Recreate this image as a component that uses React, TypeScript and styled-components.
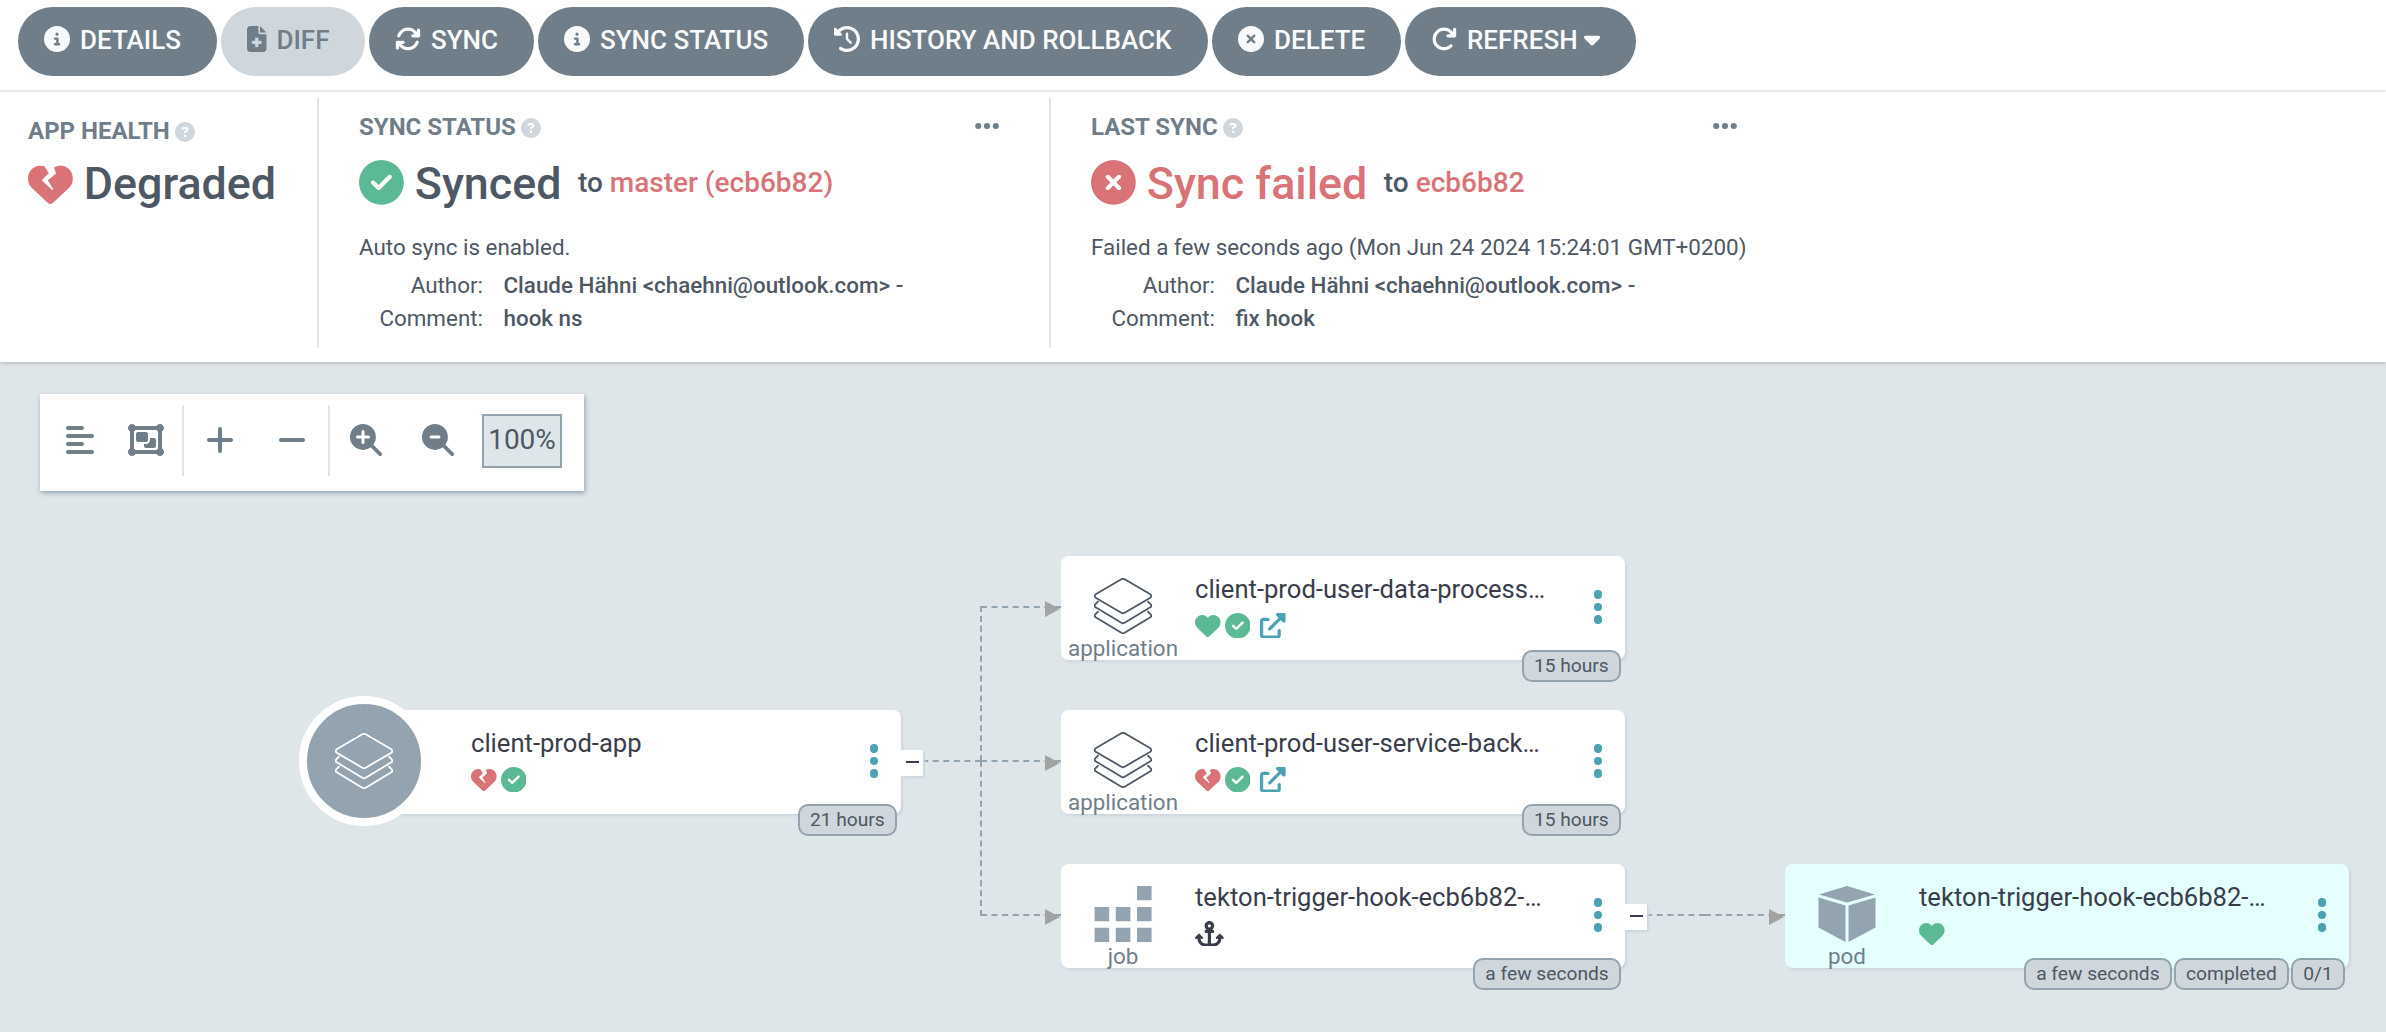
import React from 'react';
import styled, { createGlobalStyle, css } from 'styled-components';
import {
  FaAlignLeft,
  FaAnchor,
  FaArrowRotateRight,
  FaArrowsRotate,
  FaCaretDown,
  FaCircleCheck,
  FaCircleInfo,
  FaCircleQuestion,
  FaCircleXmark,
  FaClockRotateLeft,
  FaEllipsis,
  FaFileMedical,
  FaHeart,
  FaHeartCrack,
  FaMinus,
  FaObjectGroup,
  FaPlus,
} from 'react-icons/fa6';

const color = {
  slate: '#707e89',
  steel: '#93a3b0',
  light: '#cfd6dc',
  canvas: '#dfe6e9',
  line: '#dfe6e9',
  ink: '#4d5864',
  dark: '#393d4b',
  red: '#d97378',
  green: '#5bba95',
  teal: '#4aa2b3',
};

const GlobalStyle = createGlobalStyle`
  * { box-sizing: border-box; }
  body { margin: 0; background: ${color.canvas}; font-family: Roboto, sans-serif; color: ${color.ink}; }
  svg { display: block; flex: none; }
`;

const Page = styled.div`
  display: flex;
  flex-direction: column;
  width: 2386px;
  height: 1032px;
  overflow: hidden;
`;

/* Icon whose glyph is not square: $ratio is its width over its height. */
const Glyph = styled.span<{ $size: number; $ratio?: number }>`
  flex: none;
  svg {
    width: ${p => p.$size * (p.$ratio ?? 1)}px;
    height: ${p => p.$size}px;
  }
`;

/* ---------- Action bar ---------- */

const ActionBar = styled.header`
  display: flex;
  align-items: flex-start;
  gap: 4px;
  height: 92px;
  padding: 7px 18px 0;
  background: #fff;
  border-bottom: 2px solid #f0f3f6;
`;

const ActionButton = styled.button<{ $w: number; $disabled?: boolean }>`
  display: flex;
  align-items: center;
  flex: none;
  width: ${p => p.$w}px;
  height: 69px;
  padding: 0 0 5px 26px;
  border: 0;
  border-radius: 35px;
  background: ${p => (p.$disabled ? color.light : color.slate)};
  color: ${p => (p.$disabled ? color.slate : '#f8fafb')};
  font: 500 26px/34px Roboto, sans-serif;
  white-space: nowrap;
`;

const ActionText = styled.span`
  margin: 2px 6px 0 10px;
`;

/* ---------- Status panel ---------- */

const StatusPanel = styled.section`
  position: relative;
  z-index: 1;
  display: flex;
  height: 270px;
  padding: 6px 0 14px;
  background: #fff;
  box-shadow: 0 1px 4px rgba(109, 120, 130, 0.45);
`;

const StatusItem = styled.div<{ $w: number; $left: number; $top: number; $last?: boolean }>`
  width: ${p => p.$w}px;
  padding: ${p => p.$top}px 0 0 ${p => p.$left}px;
  border-right: ${p => (p.$last ? 0 : 2)}px solid ${color.line};
`;

const ItemLabel = styled.div`
  display: flex;
  align-items: center;
  gap: 5px;
  height: 28px;
  color: ${color.slate};
  font: 700 24px/28px Roboto, sans-serif;
  white-space: nowrap;
  svg { color: ${color.light}; margin-top: 1px; }
`;

const MoreIcon = styled.span`
  margin: 0 48px 0 auto;
  svg { color: ${color.slate}; margin: -3px 0 0; }
`;

const ItemValue = styled.div<{ $color?: string; $gap?: number; $iconTop?: number }>`
  display: flex;
  align-items: center;
  height: 56px;
  margin-top: ${p => p.$gap ?? 15}px;
  color: ${p => p.$color || color.ink};
  font: 500 44.8px/56px Roboto, sans-serif;
  white-space: nowrap;
  svg { margin: ${p => p.$iconTop ?? -3}px 11px 0 0; }
`;

const Revision = styled.span`
  margin: -2px 0 0 16.500px;
  color: ${color.ink};
  font: 500 28px/56px Roboto, sans-serif;
`;

const RevisionLink = styled.a`
  color: ${color.red};
`;

const Message = styled.div`
  margin-top: 20px;
  font: 400 22.4px/30px Roboto, sans-serif;
  white-space: nowrap;
`;

const CommitInfo = styled.dl`
  display: grid;
  grid-template-columns: 124px auto;
  column-gap: 20.500px;
  grid-auto-rows: 33px;
  margin: 7px 0 0;
  font: 400 22.4px/33px Roboto, sans-serif;
  white-space: nowrap;
`;

const Term = styled.dt`
  text-align: right;
`;

const Detail = styled.dd`
  margin: 0;
  font-weight: 500;
`;

/* ---------- Graph toolbar ---------- */

const Canvas = styled.main`
  position: relative;
  flex: 1;
`;

const Toolbar = styled.div`
  display: flex;
  align-items: center;
  width: 544px;
  height: 97px;
  margin: 32px 0 0 40px;
  padding-bottom: 5px;
  background: #fff;
  color: ${color.slate};
  box-shadow: 1px 2px 5px #8fa4b1;
`;

const ToolGroup = styled.div<{ $w: number; $pad: number; $gap: number; $last?: boolean }>`
  display: flex;
  align-items: center;
  gap: ${p => p.$gap}px;
  width: ${p => p.$w}px;
  height: 71px;
  padding-left: ${p => p.$pad}px;
  border-right: ${p => (p.$last ? 0 : 2)}px solid ${color.line};
`;

const ZoomValue = styled.span`
  width: 80px;
  height: 54px;
  margin: 2px 0 0 -12px;
  border: 2px solid ${color.steel};
  background: ${color.canvas};
  color: ${color.ink};
  font: 400 28px/47px Roboto, sans-serif;
  text-align: center;
`;

/* ---------- Graph nodes ---------- */

const Node = styled.article<{ $x: number; $y: number; $bg?: string }>`
  position: absolute;
  left: ${p => p.$x}px;
  top: ${p => p.$y - 362}px;
  display: flex;
  width: 564px;
  height: 104px;
  border-radius: 8px;
  background: ${p => p.$bg || '#fff'};
  box-shadow: 2px 2px 3px #ccd6dd;
`;

const KindColumn = styled.div`
  display: flex;
  flex-direction: column;
  align-items: center;
  width: 124px;
  padding-top: 22px;
  color: ${color.slate};
  font: 400 22.4px/28px Roboto, sans-serif;
`;

const KindIcon = styled.span`
  color: ${color.ink};
`;

const KindLabel = styled.span``;

const RootBadge = styled.div`
  position: absolute;
  left: -38px;
  top: -14px;
  display: flex;
  align-items: center;
  justify-content: center;
  width: 130px;
  height: 130px;
  border: 8px solid #fff;
  border-radius: 50%;
  background: ${color.steel};
  color: #fff;
`;

const NodeBody = styled.div`
  width: 370px;
  margin-left: 10px;
  padding-top: 17px;
`;

const NodeTitle = styled.div`
  color: ${color.dark};
  font: 400 25.6px/33px Roboto, sans-serif;
  white-space: nowrap;
`;

const StatusRow = styled.div`
  display: flex;
  align-items: center;
  gap: 4px;
  height: 26px;
  margin-top: 6.4px;
  color: ${color.dark};
`;

const Tint = styled.span<{ $c: string; $gap?: number }>`
  margin-left: ${p => p.$gap || 0}px;
  color: ${p => p.$c};
`;

const NodeMenu = styled.div`
  display: flex;
  flex-direction: column;
  justify-content: center;
  gap: 4px;
  margin-left: 28.500px;
  padding-bottom: 2px;
`;

const MenuDot = styled.i`
  width: 8.6px;
  height: 8.6px;
  border-radius: 50%;
  background: ${color.teal};
`;

const Tags = styled.div`
  position: absolute;
  right: 4px;
  bottom: -22px;
  display: flex;
  gap: 2px;
`;

const Tag = styled.span`
  height: 32px;
  padding: 0 10.25px;
  border: 2px solid ${color.steel};
  border-radius: 10px;
  background: ${color.light};
  color: ${color.ink};
  font: 400 19.2px/27px Roboto, sans-serif;
  white-space: nowrap;
`;

const Collapse = styled.button`
  position: absolute;
  left: 564px;
  top: 40px;
  display: flex;
  align-items: center;
  width: 22px;
  height: 26px;
  padding: 0 0 0 5px;
  border: 0;
  background: #fff;
  box-shadow: 2px 2px 2px #ccd6dd;
  &::before {
    content: '';
    width: 13px;
    height: 2px;
    margin-top: -2px;
    background: ${color.dark};
  }
`;

/* ---------- Graph edges ---------- */

const Edge = styled.i<{ $x: number; $y: number; $len: number; $vertical?: boolean }>`
  position: absolute;
  left: ${p => p.$x}px;
  top: ${p => p.$y - 362}px;
  ${p =>
    p.$vertical
      ? css`height: ${p.$len}px; border-left: 2px dashed ${color.steel};`
      : css`width: ${p.$len}px; border-top: 2px dashed ${color.steel};`}
`;

const Arrow = styled.i<{ $x: number; $y: number }>`
  position: absolute;
  left: ${p => p.$x}px;
  top: ${p => p.$y - 362}px;
  border-left: 15px solid #a3a3a3;
  border-top: 8px solid transparent;
  border-bottom: 8px solid transparent;
`;

/* ---------- Icons ---------- */

const LayersIcon = () => (
  <svg width="58" height="56" viewBox="0 0 174 168" fill="none" stroke="currentColor" strokeWidth="5.4" strokeLinecap="round" strokeLinejoin="round">
    <path d="M82 4Q87 1 92 4L169 49Q175 54 169 59L92 104Q87 108 82 104L5 59Q-1 54 5 49Z" />
    <path d="M12 71L4 79Q-1 84 5 88L82 134Q87 138 92 134L169 88Q175 84 170 79L162 71" />
    <path d="M12 101L4 109Q-1 114 5 118L82 164Q87 168 92 164L169 118Q175 114 170 109L162 101" />
  </svg>
);

const JobIcon = () => (
  <svg width="58" height="56" viewBox="0 0 58 56" fill={color.steel}>
    <path d="M43 0h14.6v14.3H43zM.6 21h14.600v14.300H.6zM21.800 21h14.600v14.300h-14.600zM43 21h14.600v14.300H43zM.6 41.700h14.600V56H.6zM21.800 41.700h14.600V56h-14.600zM43 41.700h14.600V56H43z" />
  </svg>
);

const PodIcon = () => (
  <svg width="58" height="56" viewBox="0 0 58 56" fill={color.steel}>
    <path d="M29 0L57 8.500L29 16.500L1 8.500zM.5 11.500L27.500 19.500V56L.5 41.500zM57.500 11.500L30.500 19.500V56L57.500 41.500z" />
  </svg>
);

const ExternalLinkIcon = () => (
  <svg width="25.6" height="25.6" viewBox="0 0 512 512" fill="currentColor">
    <path d="M384 320c-17.670 0-32 14.330-32 32v96H64V160h96c17.670 0 32-14.320 32-32s-14.330-32-32-32L64 96c-35.350 0-64 28.650-64 64V448c0 35.340 28.650 64 64 64h288c35.350 0 64-28.660 64-64v-96C416 334.300 401.700 320 384 320zM488 0H352c-12.940 0-24.620 7.797-29.560 19.750c-4.969 11.970-2.219 25.720 6.938 34.880L370.800 96L169.400 297.400c-12.500 12.500-12.500 32.750 0 45.250C175.600 348.900 183.800 352 192 352s16.380-3.125 22.620-9.375L416 141.300l41.380 41.380c9.156 9.141 22.880 11.840 34.880 6.938C504.200 184.600 512 172.900 512 160V24C512 10.740 501.300 0 488 0z" />
  </svg>
);

const ZoomIcon = ({ plus }: { plus?: boolean }) => (
  <svg width="32" height="32" viewBox="0 0 512 512" fill="none" strokeLinecap="round">
    <circle cx="207" cy="207" r="207" fill="currentColor" />
    <path d="M330 330L482 482" stroke="currentColor" strokeWidth="57" />
    <path d={plus ? 'M120 208H296M208 120V296' : 'M146 208H270'} stroke="#fff" strokeWidth="48" />
  </svg>
);

/* ---------- Data ---------- */

const actions = [
  { label: 'DETAILS', width: 199, icon: <FaCircleInfo /> },
  { label: 'DIFF', width: 144, icon: <FaFileMedical />, ratio: 0.75, disabled: true },
  { label: 'SYNC', width: 165, icon: <FaArrowsRotate /> },
  { label: 'SYNC STATUS', width: 266, icon: <FaCircleInfo /> },
  { label: 'HISTORY AND ROLLBACK', width: 400, icon: <FaClockRotateLeft /> },
  { label: 'DELETE', width: 189, icon: <FaCircleXmark /> },
  { label: 'REFRESH', width: 231, icon: <FaArrowRotateRight />, caret: true },
];

const heart = <Tint $c={color.green}><FaHeart size={25.6} /></Tint>;
const broken = <Tint $c={color.red}><FaHeartCrack size={25.6} /></Tint>;
const check = <Tint $c={color.green}><FaCircleCheck size={25.6} /></Tint>;
const external = <Tint $c={color.teal} $gap={6}><ExternalLinkIcon /></Tint>;
const anchor = <Glyph $size={25.6} $ratio={1.125}><FaAnchor /></Glyph>;

const nodes = [
  { x: 337, y: 710, root: true, title: 'client-prod-app', status: <>{broken}{check}</>, tags: ['21 hours'], collapse: true },
  { x: 1061, y: 556, kind: 'application', icon: <LayersIcon />, title: 'client-prod-user-data-process…', status: <>{heart}{check}{external}</>, tags: ['15 hours'] },
  { x: 1061, y: 710, kind: 'application', icon: <LayersIcon />, title: 'client-prod-user-service-back…', status: <>{broken}{check}{external}</>, tags: ['15 hours'] },
  { x: 1061, y: 864, kind: 'job', icon: <JobIcon />, title: 'tekton-trigger-hook-ecb6b82-…', status: anchor, tags: ['a few seconds'], collapse: true },
  { x: 1785, y: 864, kind: 'pod', icon: <PodIcon />, title: 'tekton-trigger-hook-ecb6b82-…', status: heart, tags: ['a few seconds', 'completed', '0/1'], bg: '#e4fffe' },
];

const Commit = ({ comment }: { comment: string }) => (
  <CommitInfo>
    <Term>Author:</Term>
    <Detail>Claude Hähni &lt;chaehni@outlook.com&gt; -</Detail>
    <Term>Comment:</Term>
    <Detail>{comment}</Detail>
  </CommitInfo>
);

export default function App() {
  return (
    <Page>
      <GlobalStyle />
      <ActionBar>
        {actions.map(a => (
          <ActionButton key={a.label} $w={a.width} $disabled={a.disabled}>
            <Glyph $size={26} $ratio={a.ratio}>{a.icon}</Glyph>
            <ActionText>{a.label}</ActionText>
            {a.caret && <Glyph $size={26} $ratio={0.625}><FaCaretDown /></Glyph>}
          </ActionButton>
        ))}
      </ActionBar>

      <StatusPanel>
        <StatusItem $w={319} $left={28} $top={19}>
          <ItemLabel>APP HEALTH<FaCircleQuestion size={20} /></ItemLabel>
          <ItemValue $gap={11} $iconTop={0}>
            <Tint $c={color.red}><FaHeartCrack size={44.8} /></Tint>Degraded
          </ItemValue>
        </StatusItem>
        <StatusItem $w={732} $left={40} $top={15}>
          <ItemLabel>
            SYNC STATUS<FaCircleQuestion size={20} />
            <MoreIcon><FaEllipsis size={28} /></MoreIcon>
          </ItemLabel>
          <ItemValue>
            <Tint $c={color.green}><FaCircleCheck size={44.8} /></Tint>Synced
            <Revision>to <RevisionLink>master (ecb6b82)</RevisionLink></Revision>
          </ItemValue>
          <Message>Auto sync is enabled.</Message>
          <Commit comment="hook ns" />
        </StatusItem>
        <StatusItem $w={736} $left={40} $top={15} $last>
          <ItemLabel>
            LAST SYNC<FaCircleQuestion size={20} />
            <MoreIcon><FaEllipsis size={28} /></MoreIcon>
          </ItemLabel>
          <ItemValue $color={color.red}>
            <Tint $c={color.red}><FaCircleXmark size={44.8} /></Tint>Sync failed
            <Revision>to <RevisionLink>ecb6b82</RevisionLink></Revision>
          </ItemValue>
          <Message>Failed a few seconds ago (Mon Jun 24 2024 15:24:01 GMT+0200)</Message>
          <Commit comment="fix hook" />
        </StatusItem>
      </StatusPanel>

      <Canvas>
        <Toolbar>
          <ToolGroup $w={144} $pad={26} $gap={34}>
            <Glyph $size={32} $ratio={0.875}><FaAlignLeft /></Glyph>
            <Glyph $size={32} $ratio={1.125}><FaObjectGroup /></Glyph>
          </ToolGroup>
          <ToolGroup $w={146} $pad={22} $gap={44}>
            <Glyph $size={32} $ratio={0.875}><FaPlus /></Glyph>
            <Glyph $size={32} $ratio={0.875}><FaMinus /></Glyph>
          </ToolGroup>
          <ToolGroup $w={254} $pad={20} $gap={40} $last>
            <ZoomIcon plus />
            <ZoomIcon />
            <ZoomValue>100%</ZoomValue>
          </ToolGroup>
        </Toolbar>

        <Edge $x={901} $y={760} $len={80} />
        <Edge $x={980} $y={606} $len={155} $vertical />
        <Edge $x={980} $y={761} $len={155} $vertical />
        <Edge $x={981} $y={606} $len={80} />
        <Edge $x={981} $y={760} $len={80} />
        <Edge $x={981} $y={914} $len={80} />
        <Edge $x={1625} $y={914} $len={80} />
        <Edge $x={1705} $y={914} $len={80} />
        <Arrow $x={1045} $y={601} />
        <Arrow $x={1045} $y={755} />
        <Arrow $x={1045} $y={909} />
        <Arrow $x={1769} $y={909} />

        {nodes.map(n => (
          <Node key={`${n.x}-${n.y}`} $x={n.x} $y={n.y} $bg={n.bg}>
            {n.root && <RootBadge><LayersIcon /></RootBadge>}
            <KindColumn>
              {n.icon && <KindIcon>{n.icon}</KindIcon>}
              {n.kind && <KindLabel>{n.kind}</KindLabel>}
            </KindColumn>
            <NodeBody>
              <NodeTitle>{n.title}</NodeTitle>
              <StatusRow>{n.status}</StatusRow>
            </NodeBody>
            <NodeMenu><MenuDot /><MenuDot /><MenuDot /></NodeMenu>
            {n.collapse && <Collapse aria-label="Collapse" />}
            <Tags>{n.tags.map(t => <Tag key={t}>{t}</Tag>)}</Tags>
          </Node>
        ))}
      </Canvas>
    </Page>
  );
}
